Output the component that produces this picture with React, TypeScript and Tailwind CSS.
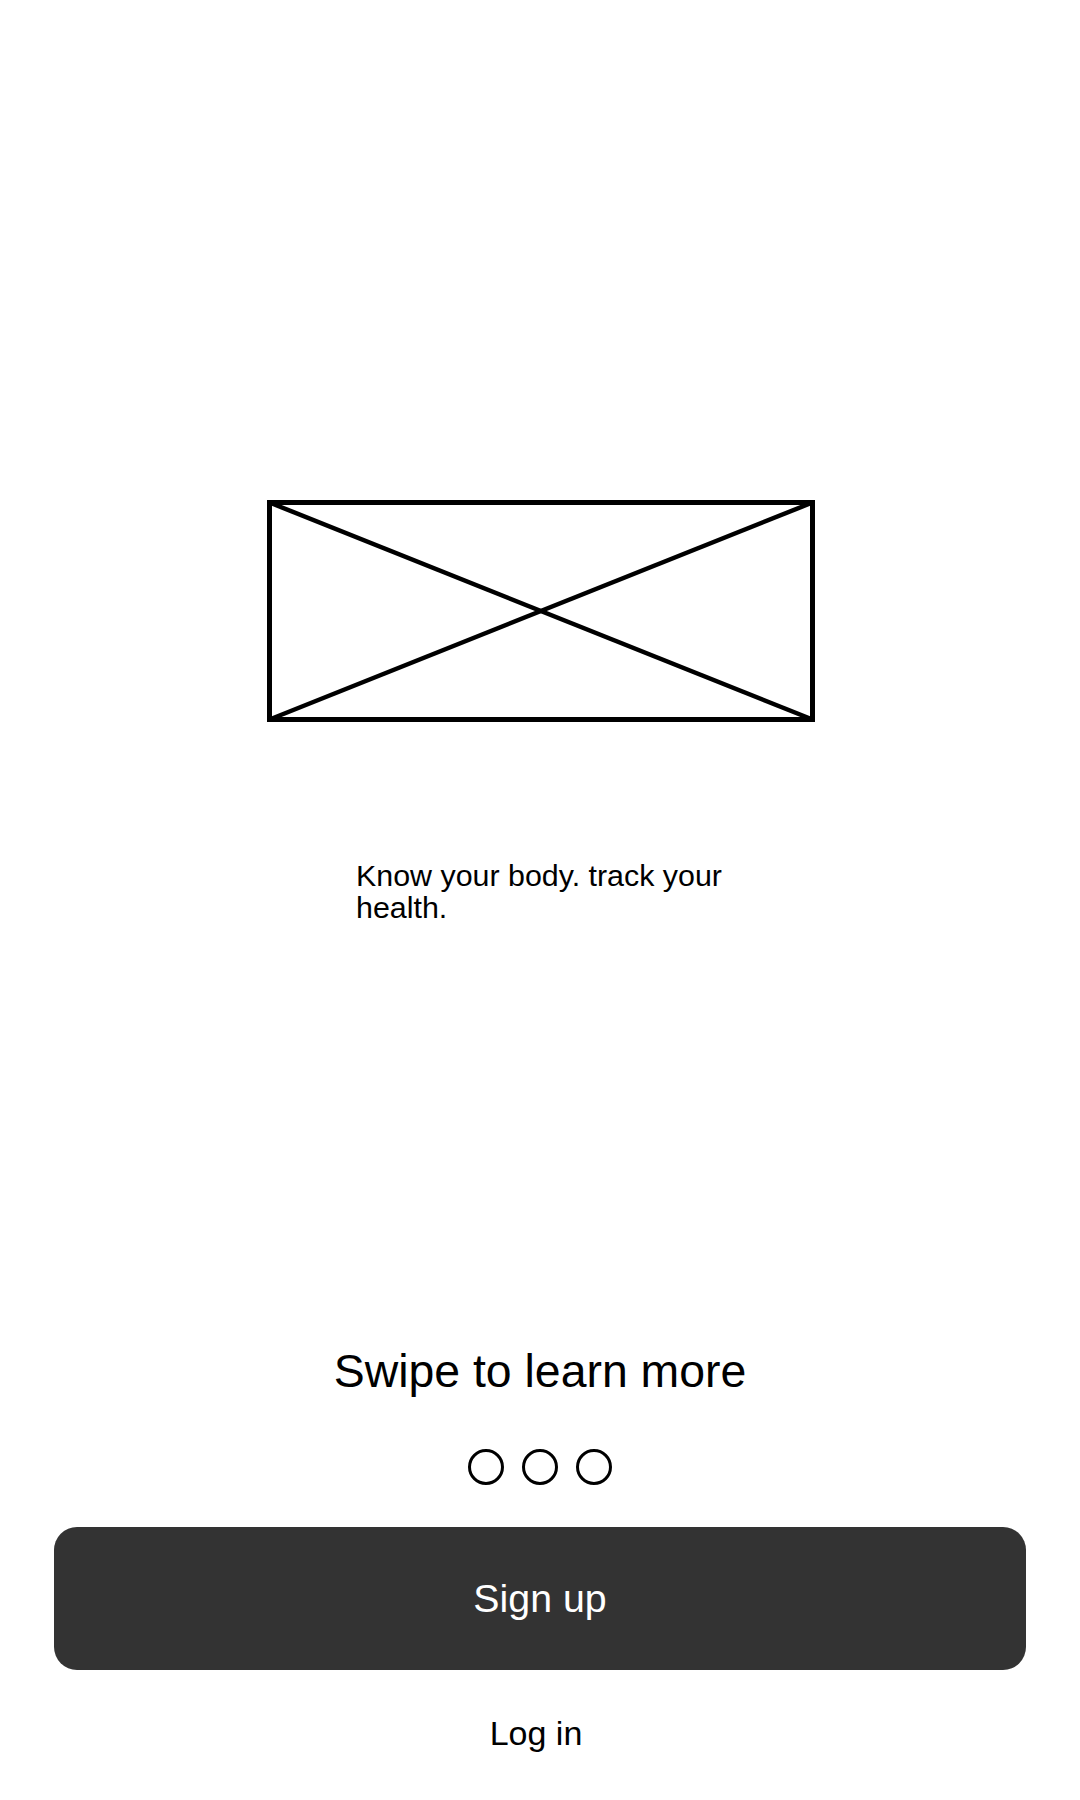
// Onboarding screen wireframe

const Placeholder = () => (
  <svg width="548" height="222" viewBox="0 0 548 222" className="block">
    <rect x="2.5" y="2.5" width="543" height="217" fill="none" stroke="black" strokeWidth="5" />
    <line x1="2.5" y1="2.5" x2="545.5" y2="219.5" stroke="black" strokeWidth="4.5" />
    <line x1="545.5" y1="2.5" x2="2.5" y2="219.5" stroke="black" strokeWidth="4.5" />
  </svg>
);

const Dots = () => (
  <div className="flex justify-center gap-[18px]">
    {[0, 1, 2].map((i) => (
      <div key={i} className="w-[36px] h-[36px] rounded-full border-[3px] border-black"></div>
    ))}
  </div>
);

export default function App() {
  return (
    <div
      className="w-[1080px] h-[1800px] bg-white text-black flex flex-col"
      style={{ fontFamily: '"Liberation Sans", Arial, sans-serif' }}
    >
      <div className="mt-[500px] flex justify-center pl-[2px]">
        <Placeholder />
      </div>

      <p className="mt-[137px] ml-[356px] w-[400px] text-[30.4px] leading-[32px]">
        Know your body. track your health.
      </p>

      <h2 className="mt-[425px] text-center text-[46.4px] leading-[46px]">Swipe to learn more</h2>

      <div className="mt-[55px]">
        <Dots />
      </div>

      <div className="mt-[42px] px-[54px]">
        <button className="w-full h-[143px] rounded-[23px] bg-[#333333] text-white text-[39.3px]">
          Sign up
        </button>
      </div>

      <button className="mt-[46px] self-center -ml-[8px] text-[34px] leading-[34px]">Log in</button>
    </div>
  );
}
